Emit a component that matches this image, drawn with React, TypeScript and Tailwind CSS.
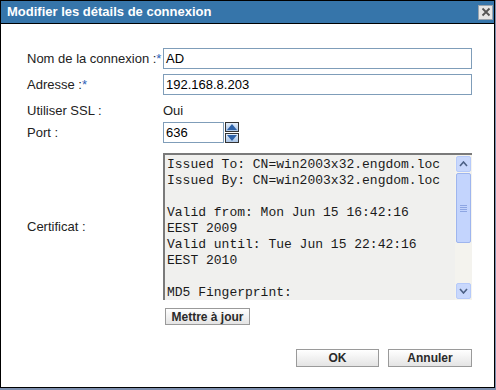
import React from 'react';

const certLines = [
  'Issued To: CN=win2003x32.engdom.loc',
  'Issued By: CN=win2003x32.engdom.loc',
  '',
  'Valid from: Mon Jun 15 16:42:16',
  'EEST 2009',
  'Valid until: Tue Jun 15 22:42:16',
  'EEST 2010',
  '',
  'MD5 Fingerprint:',
];

function Label({ children, required }: { children: React.ReactNode; required?: boolean }) {
  return (
    <div className="w-[136px] shrink-0 text-[13px] text-[#222]">
      {children}
      {required && <span className="text-[#2e63b8]">*</span>}
    </div>
  );
}

function Arrow({ up }: { up?: boolean }) {
  return (
    <svg width="9" height="6" viewBox="0 0 9 6">
      <path d={up ? 'M1 5 L4.5 1 L8 5' : 'M1 1 L4.5 5 L8 1'} fill="none" stroke="#4d6185" strokeWidth="1.6" />
    </svg>
  );
}

function Scrollbar() {
  return (
    <div className="flex w-[17px] flex-col bg-[#f4f3ee] px-px py-px">
      <div className="flex h-[16px] items-center justify-center rounded-[2px] border border-[#b6cafa] bg-[#c9d8fc]">
        <Arrow up />
      </div>
      <div className="mt-px flex h-[70px] items-center justify-center rounded-[2px] border border-[#9eb5ee] bg-[#c3d4fd]">
        <div className="flex flex-col gap-px">
          <div className="h-px w-[7px] bg-[#8ea6e3]" />
          <div className="h-px w-[7px] bg-[#8ea6e3]" />
          <div className="h-px w-[7px] bg-[#8ea6e3]" />
          <div className="h-px w-[7px] bg-[#8ea6e3]" />
        </div>
      </div>
      <div className="flex-1" />
      <div className="flex h-[16px] items-center justify-center rounded-[2px] border border-[#b6cafa] bg-[#c9d8fc]">
        <Arrow />
      </div>
    </div>
  );
}

function Button({ children, className }: { children: React.ReactNode; className?: string }) {
  return (
    <button
      className={`flex items-center justify-center border border-[#9a9a9a] bg-gradient-to-b from-[#ffffff] to-[#e4e4e4] text-[12px] font-bold text-[#2a2a2a] ${className ?? ''}`}
    >
      {children}
    </button>
  );
}

export default function App() {
  return (
    <div className="h-[390px] w-[496px] bg-[#7d8fae] font-['Liberation_Sans',Arial,sans-serif]">
      <div className="flex h-[388px] w-[495px] flex-col border border-black bg-white">
        {/* barre de titre */}
        <div className="flex h-[23px] shrink-0 items-center justify-between border-b border-black bg-[#3675aa] pl-[6px] pr-[1px]">
          <span className="text-[13px] font-bold text-white">Modifier les détails de connexion</span>
          <div className="flex h-[15px] w-[15px] items-center justify-center border border-[#9aa4ae] bg-[#e6e6e6]">
            <svg width="10" height="10" viewBox="0 0 10 10">
              <path d="M1.5 1.5 L8.5 8.5 M8.5 1.5 L1.5 8.5" stroke="#555" strokeWidth="1.8" />
            </svg>
          </div>
        </div>

        <div className="flex flex-1 flex-col pl-[26px] pr-[22px] pt-[24px]">
          <div className="flex items-center">
            <Label required>Nom de la connexion :</Label>
            <div className="flex h-[21px] flex-1 items-center border border-[#7f9db9] px-[2px] text-[13px] text-black">AD</div>
          </div>
          <div className="mt-[5px] flex items-center">
            <Label required>Adresse :</Label>
            <div className="flex h-[21px] flex-1 items-center border border-[#7f9db9] px-[2px] text-[13px] text-black">
              192.168.8.203
            </div>
          </div>
          <div className="mt-[6px] flex h-[20px] items-center">
            <Label>Utiliser SSL :</Label>
            <span className="text-[13px] text-[#222]">Oui</span>
          </div>
          <div className="mt-px flex items-center">
            <Label>Port :</Label>
            <div className="flex items-center">
              <div className="flex h-[21px] w-[61px] items-center border border-[#7f9db9] px-[2px] text-[13px] text-black">636</div>
              <div className="ml-px flex flex-col gap-[1px]">
                <div className="flex h-[10px] w-[14px] items-center justify-center border border-[#333] bg-gradient-to-b from-[#e4eefa] to-[#a9c4e6]">
                  <svg width="10" height="6" viewBox="0 0 10 6"><path d="M0 6 L5 0 L10 6 Z" fill="#2e62a8" /></svg>
                </div>
                <div className="flex h-[10px] w-[14px] items-center justify-center border border-[#333] bg-gradient-to-b from-[#e4eefa] to-[#a9c4e6]">
                  <svg width="10" height="6" viewBox="0 0 10 6"><path d="M0 0 L10 0 L5 6 Z" fill="#2e62a8" /></svg>
                </div>
              </div>
            </div>
          </div>

          <div className="mt-[10px] flex items-center">
            <Label>Certificat :</Label>
            <div className="flex h-[147px] flex-1 border-l-2 border-t-2 border-[#7a7a7a] bg-[#f0f0ee]">
              <div className="flex-1 overflow-hidden pl-[2px] pt-[2px] font-['Liberation_Mono','Courier_New',monospace] text-[13px] leading-[16px] text-[#1a1a1a] whitespace-pre">
                {certLines.map((l, i) => (
                  <div key={i} className="h-[16px]">{l}</div>
                ))}
              </div>
              <Scrollbar />
            </div>
          </div>

          <div className="mt-[8px] pl-[138px]">
            <Button className="h-[17px] w-[85px]">Mettre à jour</Button>
          </div>

          <div className="mt-[24px] flex justify-end gap-[9px]">
            <Button className="h-[18px] w-[83px]">OK</Button>
            <Button className="h-[18px] w-[84px]">Annuler</Button>
          </div>
        </div>
      </div>
    </div>
  );
}
